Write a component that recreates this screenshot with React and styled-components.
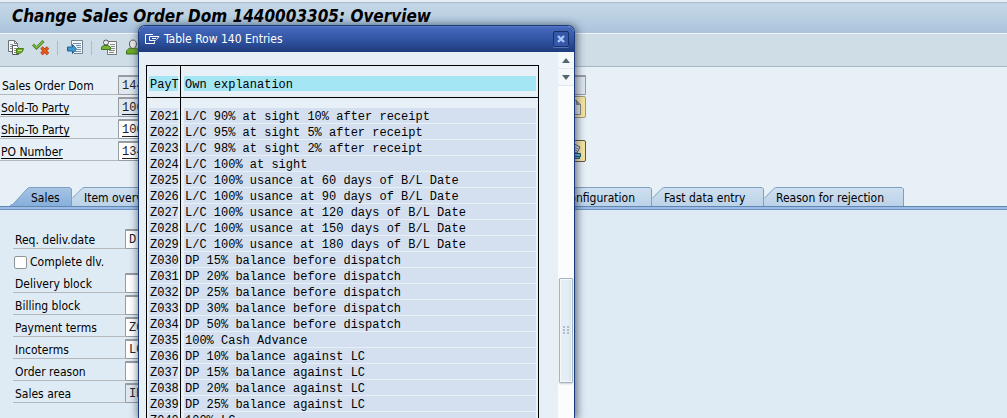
import React from 'react';
import styled, { createGlobalStyle } from 'styled-components';

const ui = '"DejaVu Sans Condensed", "DejaVu Sans", sans-serif';
const mono = '"Liberation Mono", monospace';

const Global = createGlobalStyle`
  * { box-sizing: border-box; }
  body { margin: 0; background: #dfebf4; }
  button, input { font: inherit; }
`;

const Page = styled.main`
  position: relative;
  height: 100vh;
  overflow: hidden;
  display: flex;
  flex-direction: column;
  font: 12px/16px ${ui};
  color: #000;
  background: #e8f0f7;
`;

const TitleBar = styled.header`
  flex: none;
  height: 34px;
  padding: 3px 12px 0;
  border-top: 2px solid #e6eef5;
  border-bottom: 1px solid #edf3f8;
  background: linear-gradient(#a4b9cc 0, #c6d8e7 2px, #aac4dc 100%);
`;

const Title = styled.h1`
  margin: 0;
  font: italic bold 17px/22px ${ui};
  white-space: nowrap;
`;

const Toolbar = styled.div`
  flex: none;
  display: flex;
  align-items: center;
  height: 33px;
  padding: 0 7px 4px;
  background: #cfdde7;
  border-bottom: 1px solid #a5b6c5;
`;

const ToolButton = styled.button`
  width: 18px;
  height: 18px;
  margin-right: 7px;
  padding: 0;
  border: 0;
  background: none;
  svg { display: block; }
`;

const Divider = styled.span`
  width: 1px;
  height: 14px;
  margin-right: 8px;
  background: #a3bdd5;
`;

const HeaderForm = styled.form`
  flex: none;
  padding: 6px 0 26px;
`;

const Field = styled.div`
  display: flex;
  align-items: stretch;
  height: 22px;
`;

const Label = styled.label`
  width: ${p => (p.$tab ? 112 : 118)}px;
  padding: 5px 0 0 ${p => (p.$link ? 1 : 2)}px;
  border-bottom: 1px solid #b4b8ba;
  white-space: nowrap;
`;

const LabelLink = styled.a`
  color: inherit;
  text-decoration: underline;
  text-underline-offset: 2px;
`;

const Input = styled.input`
  width: ${p => p.$w}px;
  height: 20px;
  margin-top: 2px;
  padding: 0 3px;
  border: 1px solid #999c9e;
  border-top-width: 2px;
  border-radius: 1px;
  font: 12px/16px ${mono};
  color: #222;
  text-decoration: ${p => (p.$link ? 'underline' : 'none')};
  text-underline-offset: 3px;
  background: ${p => (p.$locked ? '#dfe7ef' : '#fff')};
`;

const FieldButton = styled.button`
  width: 22px;
  height: 22px;
  margin-top: 1px;
  margin-left: -2px;
  padding: 1px;
  border: 1px solid ${p => (p.$dim ? '#a39a7c' : '#5b5744')};
  border-radius: 2px;
  background: linear-gradient(90deg, #fffbe6, #f8e59a);
  svg { display: block; }
`;

const Tabs = styled.div`
  flex: none;
  display: flex;
  align-items: flex-end;
  padding-left: 10px;
  height: 19px;
`;

const TabButton = styled.button`
  position: relative;
  width: ${p => p.$w}px;
  height: 19px;
  padding: 3px ${p => (p.$end ? 17 : 0)}px 0 ${p => (p.$active ? 21 : 12)}px;
  border: 0;
  background: none;
  text-align: ${p => (p.$end ? 'right' : 'left')};
  white-space: nowrap;
  color: #000;
`;

const TabShape = styled.svg`
  position: absolute;
  inset: 0;
  width: 100%;
  height: 100%;
`;

const TabText = styled.span`
  position: relative;
`;

const TabPanel = styled.section`
  flex: 1;
  padding: 20px 0 0 13px;
  border-top: 1px solid #5f88b8;
  box-shadow: inset 0 2px #9bbce0, inset 0 3px #6d94c0;
  background: #dfebf4;
`;

const CheckRow = styled.label`
  display: flex;
  align-items: center;
  gap: 3px;
  height: 22px;
  padding: 4px 0 0 1px;
`;

const Checkbox = styled.input`
  appearance: none;
  width: 13px;
  height: 13px;
  margin: 0;
  border: 1px solid #919699;
  border-radius: 2px;
  background: #fff;
`;

const Dialog = styled.div`
  position: absolute;
  left: 138px;
  top: 25px;
  bottom: 0;
  width: 437px;
  display: flex;
  flex-direction: column;
  overflow: hidden;
  border: 1px solid #1c3979;
  border-bottom: 0;
  border-radius: 7px 7px 0 0;
  background: #e8f0f7;
  box-shadow: 1px 1px 9px 1px rgba(20, 35, 55, 0.65);
`;

const DialogTitle = styled.div`
  flex: none;
  display: flex;
  align-items: center;
  height: 26px;
  padding: 0 5px 0 6px;
  color: #fff;
  background: linear-gradient(#5b7bc8 0, #4467ba 2px, #2e519f 60%, #1d3a7a 100%);
  h2 { flex: 1; margin: 0 0 0 4px; font: 12px/16px ${ui}; }
`;

const Close = styled.button`
  width: 16px;
  height: 16px;
  padding: 0;
  border: 1px solid #18306a;
  border-radius: 2px;
  background: #3457a7;
  box-shadow: 0 1px #5273bd;
  svg { display: block; margin: auto; }
`;

const DialogBody = styled.div`
  flex: 1;
  display: flex;
  min-height: 0;
`;

const TableArea = styled.div`
  flex: 1;
  overflow: hidden;
  padding: 13px 19px 0 7px;
`;

const Table = styled.table`
  width: 100%;
  border-collapse: separate;
  border-spacing: 0;
  border: 1px solid #000;
  table-layout: fixed;
  font: 12px/18px ${mono};
  th { font-weight: normal; text-align: left; }
  th, td { padding: 0 2px; white-space: nowrap; }
  th:first-child, td:first-child { width: 34px; border-right: 1px solid #000; }
  th:last-child, td:last-child { padding-left: 3px; }
  thead th { padding-top: 10px; padding-bottom: 6px; height: 32px; border-bottom: 1px solid #000; }
  tbody td { height: 16px; padding-bottom: 1px; }
  tbody tr:first-child td { padding-top: 10px; }
`;

const Cell = styled.span`
  display: block;
  height: 15px;
  padding-left: 1px;
  background: ${p => (p.$head ? '#a5e6f5' : '#d4e0f0')};
`;

const ScrollTrack = styled.div`
  flex: none;
  display: flex;
  flex-direction: column;
  width: 16px;
  background: #fafcfd;
`;

const Arrow = styled.button`
  flex: none;
  height: 17px;
  padding: 0;
  border: 0;
  border-bottom: 1px solid #e1e7ec;
  background: #f4f8fb;
  svg { display: block; margin: auto; }
`;

const Thumb = styled.div`
  flex: none;
  display: flex;
  align-items: center;
  justify-content: center;
  height: 105px;
  margin: 192px 1px 0;
  border: 1px solid #a3b4c2;
  border-radius: 1px;
  background: linear-gradient(90deg, #e6eef5 0 65%, #d3e1e9);
  box-shadow: inset 0 0 0 1px #f4f8fb, 0 1px 2px #c8d0d6;
`;

const rows = [
  ['Z021', 'L/C 90% at sight 10% after receipt'],
  ['Z022', 'L/C 95% at sight 5% after receipt'],
  ['Z023', 'L/C 98% at sight 2% after receipt'],
  ['Z024', 'L/C 100% at sight'],
  ['Z025', 'L/C 100% usance at 60 days of B/L Date'],
  ['Z026', 'L/C 100% usance at 90 days of B/L Date'],
  ['Z027', 'L/C 100% usance at 120 days of B/L Date'],
  ['Z028', 'L/C 100% usance at 150 days of B/L Date'],
  ['Z029', 'L/C 100% usance at 180 days of B/L Date'],
  ['Z030', 'DP 15% balance before dispatch'],
  ['Z031', 'DP 20% balance before dispatch'],
  ['Z032', 'DP 25% balance before dispatch'],
  ['Z033', 'DP 30% balance before dispatch'],
  ['Z034', 'DP 50% balance before dispatch'],
  ['Z035', '100% Cash Advance'],
  ['Z036', 'DP 10% balance against LC'],
  ['Z037', 'DP 15% balance against LC'],
  ['Z038', 'DP 20% balance against LC'],
  ['Z039', 'DP 25% balance against LC'],
  ['Z040', '100% LC'],
];

const tabs = [
  { text: 'Sales', w: 62, active: true },
  { text: 'Item overview', w: 112 },
  { text: 'Configuration', w: 468, end: true },
  { text: 'Fast data entry', w: 112 },
  { text: 'Reason for rejection', w: 140 },
];

function Tab({ text, w, active, end }) {
  const slant = active
    ? `M0 18.5 Q3 18 5 15 L17 2 Q18 .5 20 .5 H${w - 2} L${w - 0.5} 2 V19`
    : `M.5 11 L10 1.5 Q11 .5 13 .5 H${w - 2} L${w - 0.5} 2 V19`;
  const id = active ? 'tabOn' : 'tabOff';
  return (
    <TabButton $w={w} $active={active} $end={end} type="button" role="tab" aria-selected={!!active}>
      <TabShape viewBox={`0 0 ${w} 19`} aria-hidden="true">
        <defs>
          <linearGradient id={id} x1="0" y1="0" x2="0" y2="1">
            <stop offset="0" stopColor={active ? '#a6c4e4' : '#cfe0ef'} />
            <stop offset="1" stopColor={active ? '#86afdb' : '#bbd2e8'} />
          </linearGradient>
        </defs>
        <path d={active ? `${slant} H0 Z` : `${slant} H0 V11 Z`} fill={`url(#${id})`} />
        <path d={slant} fill="none" stroke="#7f9fc2" />
      </TabShape>
      <TabText>{text}</TabText>
    </TabButton>
  );
}

function DisplayIcon() {
  return (
    <svg width="18" height="18" viewBox="0 0 18 18">
      <path d="M1.5 1.5h6l3 3v8h-9z" fill="#f8f9fa" stroke="#6b7175" />
      <path d="M7.500 1.500v3h3" fill="none" stroke="#6b7175" />
      <path d="M3 5.500h3M3 7.500h2M3 9.500h2" stroke="#8a9094" />
      <path d="M5.500 6.500h4l2 2v7h-6z" fill="#fff" stroke="#55595c" />
      <path d="M7 9.500h2M7 11.500h3M7 13.500h3" stroke="#888" />
      <path d="M9.500 9.500h7l-1 3-3 2h-3z" fill="#6fa82a" stroke="#477d17" />
      <path d="M11 11.500h4" stroke="#c5e28a" />
    </svg>
  );
}

function CheckIcon() {
  return (
    <svg width="18" height="18" viewBox="0 0 18 18">
      <path d="M1 5.500l3.500 3.500L11.500 2" fill="none" stroke="#4a7d26" strokeWidth="3" />
      <path d="M1.500 5.500l3 3L11 2.500" fill="none" stroke="#7cc043" strokeWidth="1.400" />
      <path d="M9.500 8.500l6.500 6.500m0-6.500l-6.500 6.500" stroke="#b5400f" strokeWidth="3.400" />
      <path d="M9.500 8.500l6.500 6.500m0-6.500l-6.500 6.500" stroke="#e85a1c" strokeWidth="1.800" />
    </svg>
  );
}

function InsertIcon() {
  return (
    <svg width="18" height="18" viewBox="0 0 18 18">
      <path d="M5.500 7V1.500h11v13H8" fill="#f4f7fa" stroke="#75828d" />
      <path d="M7 4.500h8M10 6.500h5M11 8.500h4M11 10.500h4M9 12.500h6" stroke="#6d92b3" />
      <path d="M1.500 8h5V5.500L10.500 10 6.500 14.500V12h-5z" fill="#3e9bd0" stroke="#1e5f91" />
    </svg>
  );
}

function ProposalIcon() {
  return (
    <svg width="18" height="18" viewBox="0 0 18 18">
      <path d="M7.500 2.500h9v13h-9z" fill="#f7f8f8" stroke="#777" />
      <path d="M10 5.500h5M11 7.500h4M11 9.500h4M9 11.500h6M9 13.500h5" stroke="#888" />
      <path d="M1.500 10.500V8L4 6.500h4L10.500 8v2.500z" fill="#78b334" stroke="#427620" />
      <circle cx="6" cy="3.500" r="2.500" fill="#eee" stroke="#555" />
    </svg>
  );
}

function PersonIcon() {
  return (
    <svg width="18" height="18" viewBox="0 0 18 18">
      <path d="M1.500 15v-3l3-3h7l3 3v3z" fill="#6dab24" stroke="#3b701c" />
      <path d="M8 1c-2.500 0-3.500 2-3.500 4S6 9.500 8 9.500s3.500-2.500 3.500-4.500S10.500 1 8 1z" fill="#eee" stroke="#555" />
    </svg>
  );
}

function HeaderField({ id, text, value, w, link, locked, children }) {
  return (
    <Field>
      <Label htmlFor={id} $link={link}>
        {link ? <LabelLink href="#">{text}</LabelLink> : text}
      </Label>
      <Input id={id} defaultValue={value} $w={w} $link={link} $locked={locked} />
      {children}
    </Field>
  );
}

function PanelField({ id, text, value, locked }) {
  return (
    <Field>
      <Label htmlFor={id} $tab>{text}</Label>
      <Input id={id} defaultValue={value} $w={120} $locked={locked} />
    </Field>
  );
}

export default function App() {
  return (
    <Page>
      <Global />
      <TitleBar><Title>Change Sales Order Dom 1440003305: Overview</Title></TitleBar>
      <Toolbar>
        <ToolButton aria-label="Display document"><DisplayIcon /></ToolButton>
        <ToolButton aria-label="Reject"><CheckIcon /></ToolButton>
        <Divider />
        <ToolButton aria-label="Insert"><InsertIcon /></ToolButton>
        <Divider />
        <ToolButton aria-label="Propose items"><ProposalIcon /></ToolButton>
        <ToolButton aria-label="Partner"><PersonIcon /></ToolButton>
      </Toolbar>
      <HeaderForm>
        <HeaderField id="order" text="Sales Order Dom" value="1440003305" w={468} locked />
        <HeaderField id="sold" text="Sold-To Party" value="1000" w={448} link locked>
          <FieldButton type="button" $dim aria-label="Sold-to document">
            <svg width="18" height="18" viewBox="0 0 18 18">
              <path d="M3.500 2.500h7l4 4v10h-11z" fill="#eeece8" stroke="#8c8880" />
              <path d="M10.500 2.500v4h4z" fill="#999" stroke="#8c8880" />
            </svg>
          </FieldButton>
        </HeaderField>
        <HeaderField id="ship" text="Ship-To Party" value="1000" w={420} link />
        <HeaderField id="po" text="PO Number" value="134" w={448} link>
          <FieldButton type="button" aria-label="Header details">
            <svg width="18" height="18" viewBox="0 0 18 18">
              <path d="M5 6l3-4 6 3-3 6-5-1z" fill="#f4f4f4" stroke="#555" />
              <path d="M8 5l4 2M7 7l4 2" stroke="#777" />
              <path d="M3.500 11.500h11v3h-11zM3.500 14.500h10v2h-10z" fill="#77b7d5" stroke="#13587d" />
            </svg>
          </FieldButton>
        </HeaderField>
      </HeaderForm>
      <Tabs role="tablist">{tabs.map(t => <Tab key={t.text} {...t} />)}</Tabs>
      <TabPanel>
        <PanelField id="date" text="Req. deliv.date" value="D" />
        <CheckRow><Checkbox type="checkbox" />Complete dlv.</CheckRow>
        <PanelField id="delivery" text="Delivery block" />
        <PanelField id="billing" text="Billing block" />
        <PanelField id="terms" text="Payment terms" value="Z021" />
        <PanelField id="inco" text="Incoterms" value="LC" />
        <PanelField id="reason" text="Order reason" />
        <PanelField id="area" text="Sales area" value="IE" locked />
      </TabPanel>
      <Dialog role="dialog" aria-labelledby="dialog-title">
        <DialogTitle>
          <svg width="15" height="12" viewBox="0 0 15 12" fill="none" stroke="#fff">
            <path d="M8 1.500H.5v9h9V8.500M4.500 3.500H14L11.500 6.500M4.500 3.500v4h6M7 5.500h4" />
          </svg>
          <h2 id="dialog-title">Table Row 140 Entries</h2>
          <Close aria-label="Close">
            <svg width="10" height="10" viewBox="0 0 10 10"><path d="M2 2l6 6m0-6L2 8" stroke="#a9c6ff" strokeWidth="2.400" /></svg>
          </Close>
        </DialogTitle>
        <DialogBody>
          <TableArea>
            <Table>
              <thead><tr><th><Cell $head>PayT</Cell></th><th><Cell $head>Own explanation</Cell></th></tr></thead>
              <tbody>
                {rows.map(([code, text]) => (
                  <tr key={code}><td><Cell>{code}</Cell></td><td><Cell>{text}</Cell></td></tr>
                ))}
              </tbody>
            </Table>
          </TableArea>
          <ScrollTrack>
            <Arrow aria-label="Scroll up"><svg width="8" height="5" viewBox="0 0 8 5"><path d="M0 5l4-5 4 5z" fill="#53666f" /></svg></Arrow>
            <Arrow aria-label="Scroll down"><svg width="8" height="5" viewBox="0 0 8 5"><path d="M0 0l4 5 4-5z" fill="#53666f" /></svg></Arrow>
            <Thumb>
              <svg width="7" height="9" viewBox="0 0 7 9"><path d="M0 1h2M0 4h2M0 7h2M4 1h2M4 4h2M4 7h2" stroke="#9eacba" strokeWidth="1.500" /></svg>
            </Thumb>
          </ScrollTrack>
        </DialogBody>
      </Dialog>
    </Page>
  );
}
